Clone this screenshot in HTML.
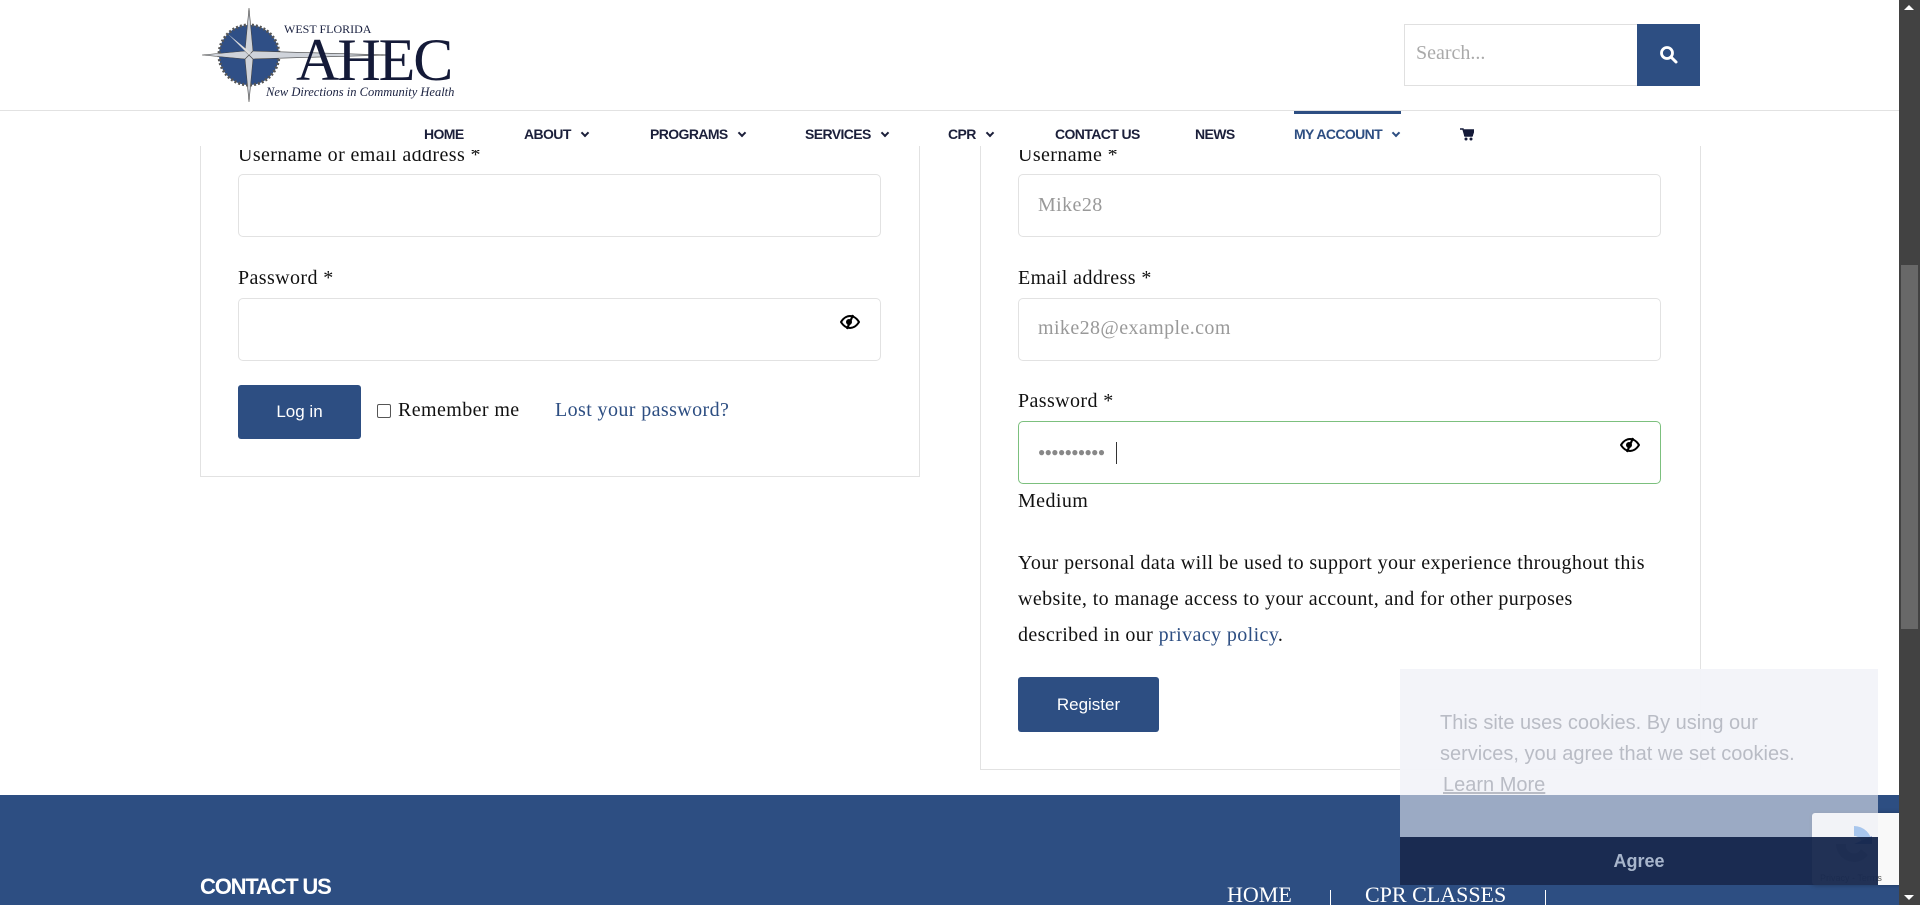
<!DOCTYPE html>
<html><head><meta charset="utf-8"><style>
*{box-sizing:border-box;margin:0;padding:0}
html{overflow:hidden}
body{width:1920px;height:905px;overflow:hidden;background:#fff;font-family:"Liberation Serif",serif;color:#111;position:relative}
.abs{position:absolute}
.nav span{position:absolute;top:126px;font-family:"Liberation Sans",sans-serif;font-weight:bold;font-size:14px;color:#1b1f3a;letter-spacing:-0.6px}
.chev{display:inline-block;width:6px;height:6px;border-right:2px solid #1b1f3a;border-bottom:2px solid #1b1f3a;transform:rotate(45deg);margin-left:11px;position:relative;top:-3px}
.lbl{position:absolute;font-size:20px;letter-spacing:0.4px;color:#111}
.inp{position:absolute;border:1px solid #e2e2e2;border-radius:5px;background:#fff}
.btn{position:absolute;background:#2d4e82;border-radius:3px;color:#fff;font-family:"Liberation Sans",sans-serif;font-size:17px;display:flex;align-items:center;justify-content:center}
.ph{position:absolute;font-size:20px;letter-spacing:0.4px;color:#999}
</style></head><body>
<svg class="abs" style="left:200px;top:4px" width="260" height="100" viewBox="0 0 260 100">
<circle cx="49" cy="51" r="30" fill="#2f4f86" stroke="#555" stroke-width="3" stroke-dasharray="2 2"/>
<polygon points="49,4 53,47 49,51 45,47" fill="#cfd3da" stroke="#444" stroke-width="0.6"/>
<polygon points="49,98 53,55 49,51 45,55" fill="#cfd3da" stroke="#444" stroke-width="0.6"/>
<polygon points="2,51 45,47 49,51 45,55" fill="#cfd3da" stroke="#444" stroke-width="0.6"/>
<polygon points="190,51 53,47 49,51 53,55" fill="#cfd3da" stroke="#444" stroke-width="0.6"/>
<polygon points="28,30 51,49 49,51" fill="#ddd"/><polygon points="70,30 51,49 49,51" fill="#ddd"/>
<polygon points="28,72 47,53 49,51" fill="#ddd"/><polygon points="70,72 51,53 49,51" fill="#ddd"/>
<text x="84" y="29" font-family="Liberation Serif" font-size="12" fill="#1a2140">WEST FLORIDA</text>
<text x="96" y="76" font-family="Liberation Serif" font-size="60" fill="#141a38" letter-spacing="-2">AHEC</text>
<text x="66" y="92" font-family="Liberation Serif" font-style="italic" font-size="12.5" fill="#1a2140">New Directions in Community Health</text>
</svg>
<div class="abs" style="left:1404px;top:24px;width:234px;height:62px;border:1px solid #e0e0e0"></div>
<div class="abs" style="left:1416px;top:42px;font-size:20px;color:#aaa">Search...</div>
<div class="abs" style="left:1637px;top:24px;width:63px;height:62px;background:#2d4e82"></div>
<svg class="abs" style="left:1659px;top:45px" width="20" height="20" viewBox="0 0 20 20"><circle cx="8" cy="8" r="5.5" fill="none" stroke="#fff" stroke-width="2.8"/><line x1="12" y1="12" x2="17" y2="17" stroke="#fff" stroke-width="3" stroke-linecap="round"/></svg>
<div class="abs" style="left:0;top:110px;width:1903px;height:1px;background:#e2e2e2"></div>
<div class="nav">
<span style="left:424px">HOME</span>
<span style="left:524px">ABOUT<i class="chev"></i></span>
<span style="left:650px">PROGRAMS<i class="chev"></i></span>
<span style="left:805px">SERVICES<i class="chev"></i></span>
<span style="left:948px">CPR<i class="chev"></i></span>
<span style="left:1055px">CONTACT US</span>
<span style="left:1195px">NEWS</span>
<span style="left:1294px;color:#2d4e82">MY ACCOUNT<i class="chev" style="border-color:#2d4e82"></i></span>
</div>
<div class="abs" style="left:1294px;top:111px;width:107px;height:3px;background:#2d4e82"></div>
<svg class="abs" style="left:1460px;top:128px" width="14" height="13" viewBox="0 0 14 13"><path d="M0 1h3l2 7h7l2-6H4" fill="#141a38" stroke="#141a38" stroke-width="1.5"/><rect x="4" y="3" width="9" height="5" fill="#141a38"/><circle cx="6" cy="11" r="1.5" fill="#141a38"/><circle cx="11" cy="11" r="1.5" fill="#141a38"/></svg>
<div class="abs" style="left:200px;top:146px;width:720px;height:331px;border:1px solid #e2e2e2;border-top:none"></div>
<div class="lbl" style="left:238px;top:144px;clip-path:inset(6px 0 0 0)">Username or email address *</div>
<div class="inp" style="left:238px;top:174px;width:643px;height:63px"></div>
<div class="lbl" style="left:238px;top:267px">Password *</div>
<div class="inp" style="left:238px;top:298px;width:643px;height:63px"></div>
<svg class="abs" style="left:840px;top:314px" width="20" height="16" viewBox="0 0 20 16"><path d="M1 8C4 3 8 2 10 2s6 1 9 6c-3 5-7 6-9 6S4 13 1 8z" fill="none" stroke="#000" stroke-width="2"/><circle cx="9" cy="8" r="3" fill="#000"/><line x1="13" y1="1" x2="7" y2="15" stroke="#000" stroke-width="2.2"/></svg>
<div class="btn" style="left:238px;top:385px;width:123px;height:54px">Log in</div>
<div class="abs" style="left:377px;top:404px;width:14px;height:14px;border:1px solid #555;border-radius:2px"></div>
<div class="lbl" style="left:398px;top:399px">Remember me</div>
<div class="lbl" style="left:555px;top:399px;color:#2d4e82">Lost your password?</div>
<div class="abs" style="left:980px;top:146px;width:721px;height:624px;border:1px solid #e2e2e2;border-top:none"></div>
<div class="lbl" style="left:1018px;top:144px;clip-path:inset(6px 0 0 0)">Username *</div>
<div class="inp" style="left:1018px;top:174px;width:643px;height:63px"></div>
<div class="ph" style="left:1038px;top:194px">Mike28</div>
<div class="lbl" style="left:1018px;top:267px">Email address *</div>
<div class="inp" style="left:1018px;top:298px;width:643px;height:63px"></div>
<div class="ph" style="left:1038px;top:317px">mike28@example.com</div>
<div class="lbl" style="left:1018px;top:390px">Password *</div>
<div class="inp" style="left:1018px;top:421px;width:643px;height:63px;border-color:#7cc07e"></div>
<div class="abs" style="left:1038px;top:445px;font-size:12px;color:#888;letter-spacing:-0.6px;font-family:'Liberation Sans',sans-serif">●●●●●●●●●●</div>
<div class="abs" style="left:1116px;top:442px;width:1px;height:22px;background:#333"></div>
<svg class="abs" style="left:1620px;top:437px" width="20" height="16" viewBox="0 0 20 16"><path d="M1 8C4 3 8 2 10 2s6 1 9 6c-3 5-7 6-9 6S4 13 1 8z" fill="none" stroke="#000" stroke-width="2"/><circle cx="9" cy="8" r="3" fill="#000"/><line x1="13" y1="1" x2="7" y2="15" stroke="#000" stroke-width="2.2"/></svg>
<div class="lbl" style="left:1018px;top:490px">Medium</div>
<div class="lbl" style="left:1018px;top:545px;line-height:36px;width:630px">Your personal data will be used to support your experience throughout this website, to manage access to your account, and for other purposes described in our <span style="color:#2d4e82">privacy policy</span>.</div>
<div class="btn" style="left:1018px;top:677px;width:141px;height:55px">Register</div>
<div class="abs" style="left:0;top:795px;width:1903px;height:110px;background:#2d4e82"></div>
<div class="abs" style="left:200px;top:874px;font-family:'Liberation Sans',sans-serif;font-weight:bold;font-size:22px;color:#fff;letter-spacing:-1.2px">CONTACT US</div>
<div class="abs" style="left:1227px;top:882px;font-size:22px;color:#fff">HOME</div>
<div class="abs" style="left:1330px;top:890px;width:1px;height:15px;background:#fff"></div>
<div class="abs" style="left:1365px;top:882px;font-size:22px;color:#fff">CPR CLASSES</div>
<div class="abs" style="left:1545px;top:890px;width:1px;height:15px;background:#fff"></div>
<div class="abs" style="left:1812px;top:813px;width:91px;height:72px;background:#f9f9f9;box-shadow:0 0 5px rgba(0,0,0,.3);border-radius:3px"></div>
<svg class="abs" style="left:1832px;top:822px" width="44" height="44" viewBox="0 0 44 44"><path d="M22 4a18 18 0 0 1 18 18H30a8 8 0 0 0-8-8z" fill="#4a90e2"/><path d="M40 22H22l18-8z" fill="#1c3aa9"/><path d="M4 22A18 18 0 0 0 22 40a18 18 0 0 0 14-7l-7-6a8 8 0 0 1-15-5z" fill="#aaa"/></svg>
<div class="abs" style="left:1820px;top:873px;font-family:'Liberation Sans',sans-serif;font-size:9px;color:#555">Privacy - Terms</div>
<div class="abs" style="left:1400px;top:669px;width:478px;height:168px;background:rgba(236,238,244,.58)"></div>
<div class="abs" style="left:1400px;top:669px;width:478px;height:126px;background:rgba(243,244,248,.9)"></div>
<div class="abs" style="left:1440px;top:708px;width:380px;font-family:'Liberation Sans',sans-serif;font-size:20px;line-height:31px;color:#b9bcc5">This site uses cookies. By using our services, you agree that we set cookies.<br><span style="text-decoration:underline;margin-left:3px">Learn More</span></div>
<div class="abs" style="left:1400px;top:837px;width:478px;height:48px;background:rgba(26,42,80,.97);color:#a8b6cc;font-family:'Liberation Sans',sans-serif;font-weight:bold;font-size:18px;display:flex;align-items:center;justify-content:center">Agree</div>
<div class="abs" style="left:1899px;top:0;width:21px;height:905px;background:#424242"></div>
<div class="abs" style="left:1901px;top:265px;width:17px;height:364px;background:#686868"></div>
<div class="abs" style="left:1904px;top:5px;width:0;height:0;border-left:5px solid transparent;border-right:5px solid transparent;border-bottom:5px solid #fff"></div>
<div class="abs" style="left:1904px;top:895px;width:0;height:0;border-left:5px solid transparent;border-right:5px solid transparent;border-top:5px solid #fff"></div>
</body></html>
